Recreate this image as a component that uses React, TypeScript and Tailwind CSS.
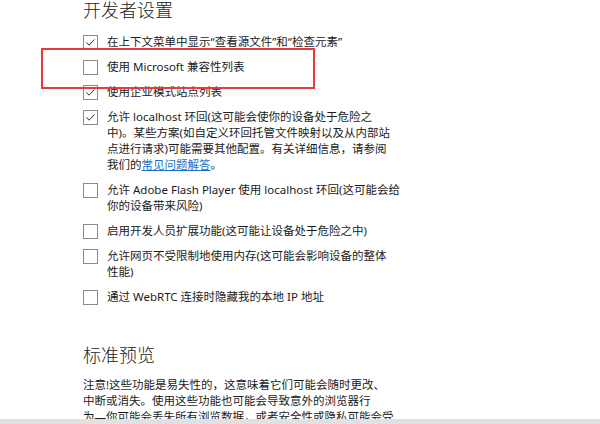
import React from 'react'

const font = { fontFamily: '"Noto Sans", "Noto Sans CJK SC", sans-serif' }

function Check({ checked }: { checked?: boolean }) {
    return (
        <span className="mt-[0.5px] flex h-[15px] w-[15px] shrink-0 items-center justify-center border-[1.5px] border-[#8a8a8a] bg-white">
            {checked && (
                <svg viewBox="0 0 15 15" className="h-[15px] w-[15px]">
                    <path d="M2.6 7.4 L5.9 10.6 L12.2 3.9" fill="none" stroke="#2b2b2b" strokeWidth="1.1" />
                </svg>
            )}
        </span>
    )
}

function Row({ checked, lines }: { checked?: boolean; lines: React.ReactNode[] }) {
    return (
        <li className="flex items-start gap-[9px]">
            <Check checked={checked} />
            <div className="flex flex-col">
                {lines.map((l, i) => (
                    <span key={i} className="whitespace-nowrap leading-[16px]">{l}</span>
                ))}
            </div>
        </li>
    )
}

export default function App() {
    return (
        <div style={font} className="relative flex h-[424px] w-[600px] flex-col overflow-hidden bg-white text-[11.5px] text-[#1b1b1b]">
            <div className="flex-1 pl-[83px]">
                <h1 className="text-[18px] font-light leading-[20px] text-[#222]">开发者设置</h1>

                <ul className="mt-[14px] flex flex-col gap-[9px]">
                    <Row checked lines={['在上下文菜单中显示“查看源文件”和“检查元素”']} />
                    <Row lines={['使用 Microsoft 兼容性列表']} />
                    <Row checked lines={['使用企业模式站点列表']} />
                    <Row
                        checked
                        lines={[
                            '允许 localhost 环回(这可能会使你的设备处于危险之',
                            '中)。某些方案(如自定义环回托管文件映射以及从内部站',
                            '点进行请求)可能需要其他配置。有关详细信息，请参阅',
                            <>我们的<a className="text-[#1a6fc9] underline">常见问题解答</a>。</>,
                        ]}
                    />
                    <Row lines={['允许 Adobe Flash Player 使用 localhost 环回(这可能会给', '你的设备带来风险)']} />
                    <Row lines={['启用开发人员扩展功能(这可能让设备处于危险之中)']} />
                    <Row lines={['允许网页不受限制地使用内存(这可能会影响设备的整体', '性能)']} />
                    <Row lines={['通过 WebRTC 连接时隐藏我的本地 IP 地址']} />
                </ul>

                <h2 className="mt-[40px] text-[18px] font-light leading-[20px] text-[#222]">标准预览</h2>

                <p className="mt-[12px] flex flex-col leading-[16px]">
                    <span className="whitespace-nowrap">注意!这些功能是易失性的，这意味着它们可能会随时更改、</span>
                    <span className="whitespace-nowrap">中断或消失。使用这些功能也可能会导致意外的浏览器行</span>
                    <span className="whitespace-nowrap">为—你可能会丢失所有浏览数据，或者安全性或隐私可能会受</span>
                </p>
            </div>

            {/* bottom scroll strip */}
            <div className="absolute bottom-0 left-0 h-[5px] w-full bg-[#e1e1e1]" />

            {/* red annotation */}
            <div className="absolute left-[41px] top-[48px] h-[41px] w-[274px] border-2 border-[#e8393d]" />
        </div>
    )
}
